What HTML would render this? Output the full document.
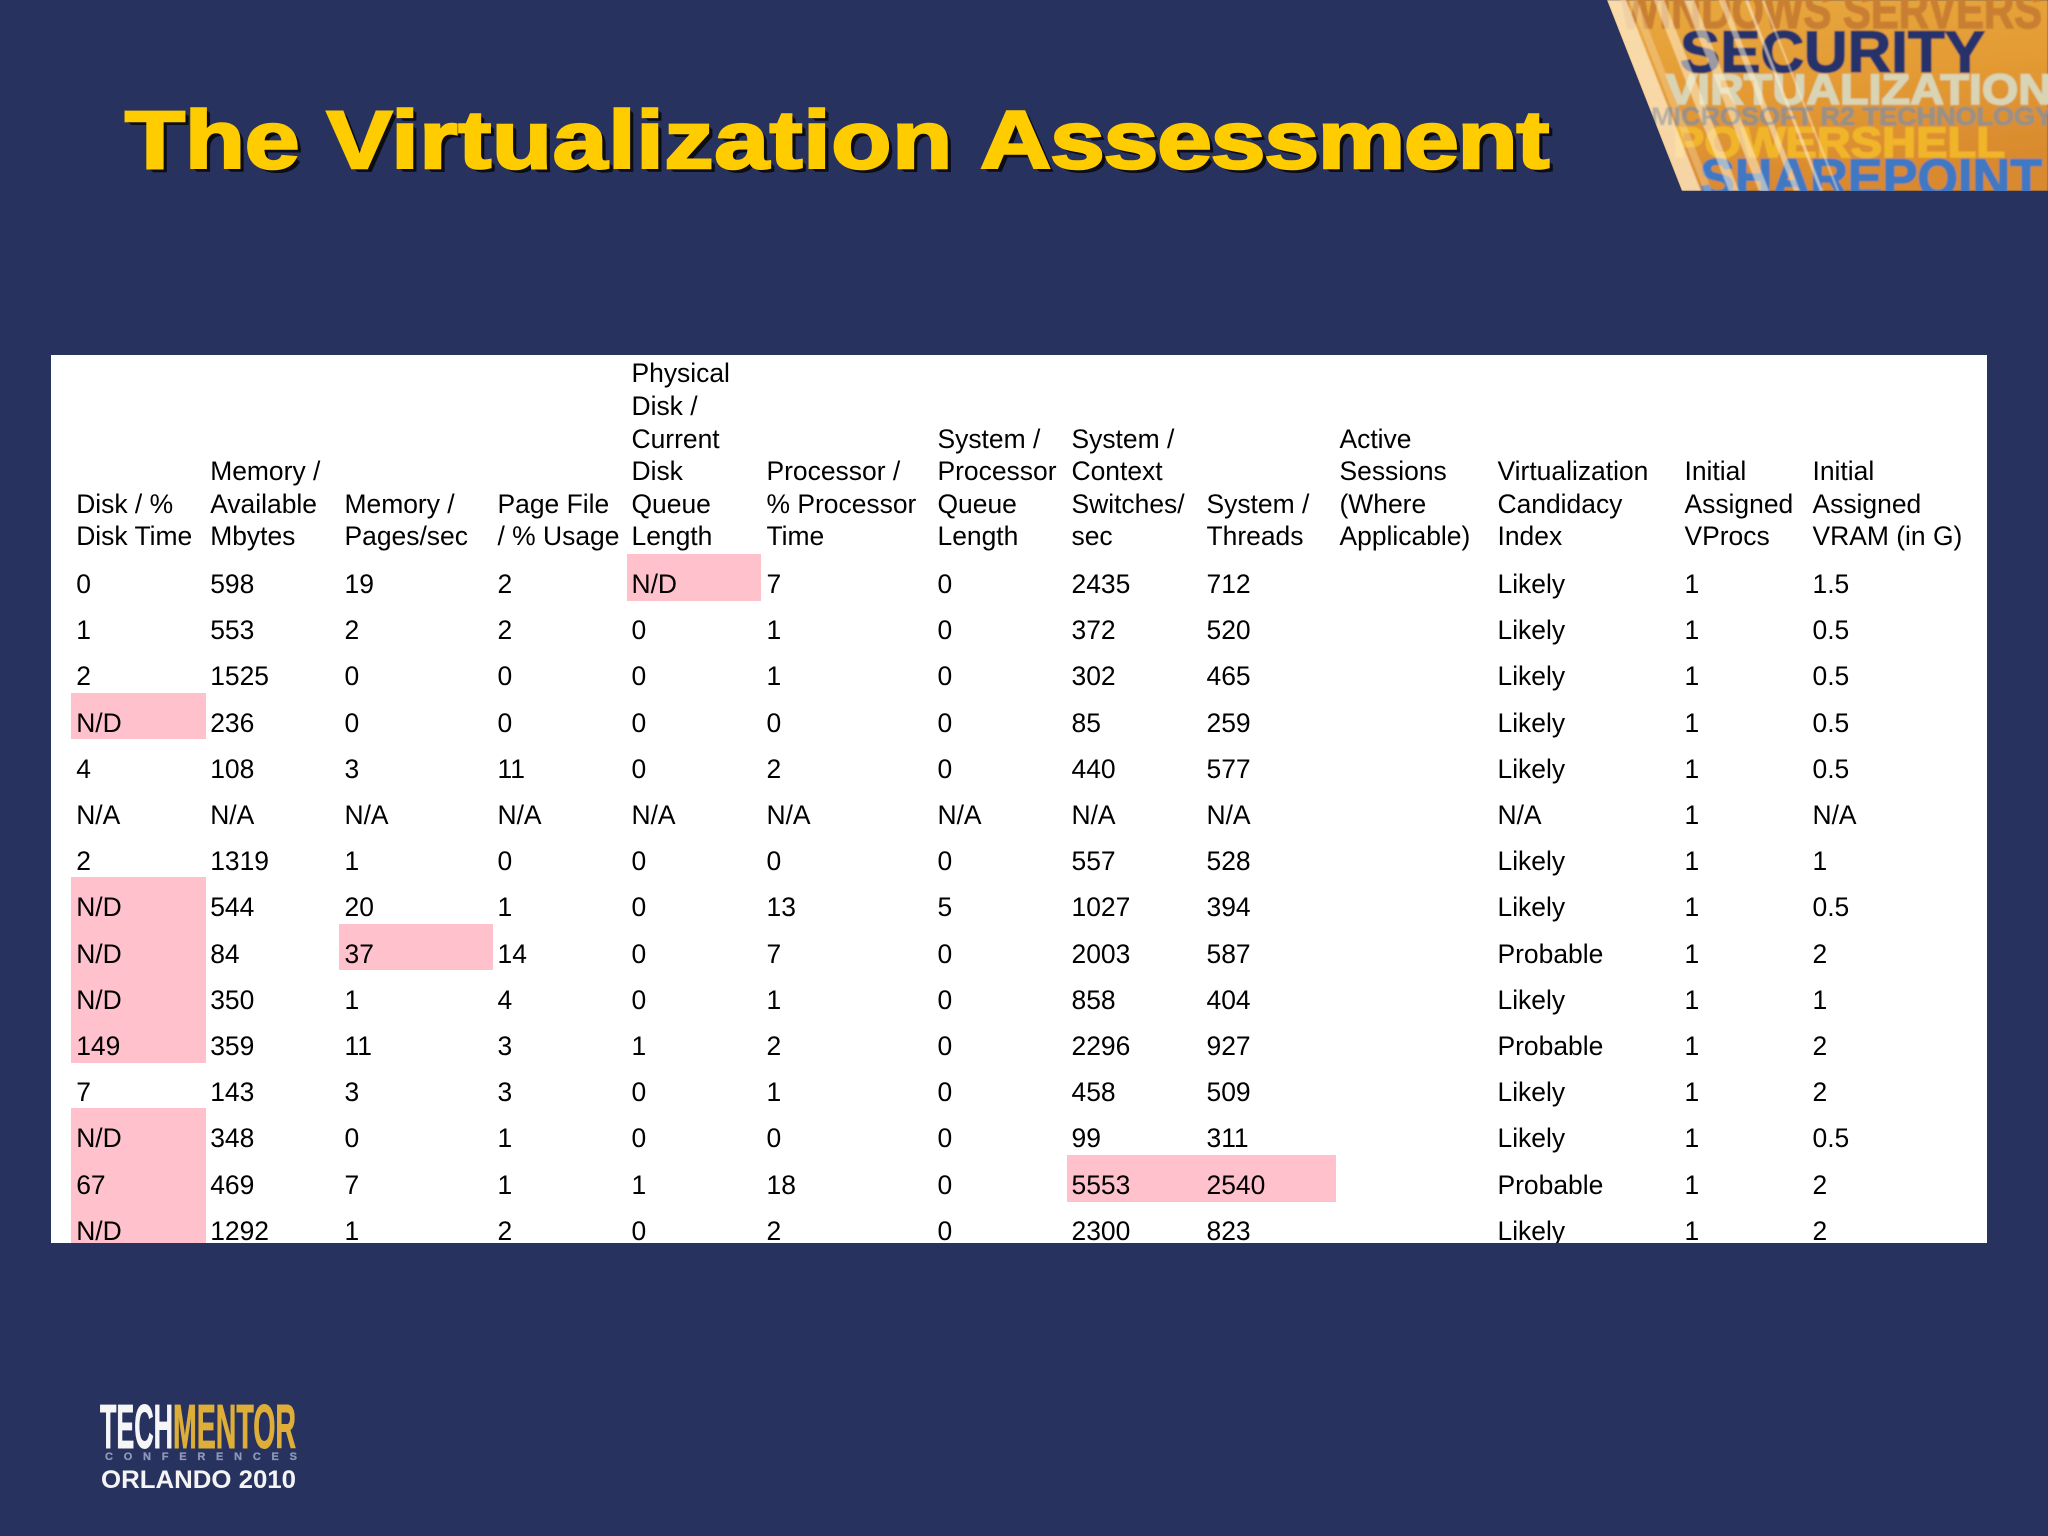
<!DOCTYPE html>
<html lang="en"><head><meta charset="utf-8"><title>The Virtualization Assessment</title>
<style>
html,body{margin:0;padding:0;width:2048px;height:1536px;overflow:hidden;background:#28325f}
body{position:relative;font-family:"Liberation Sans",Arial,sans-serif}
h1{position:absolute;left:125px;top:91.5px;margin:0;font-size:82px;line-height:98px;font-weight:bold;color:#ffcc00;white-space:nowrap;transform:scaleX(1.197);transform-origin:0 0;-webkit-text-stroke:2.6px #ffcc00;text-shadow:1px 1px 0 #0d0d14,2px 2px 0 #0d0d14,3px 3px 0 #0d0d14,4px 4px 0 #0d0d14}
h1 .v{letter-spacing:.7px}
h1 .a{letter-spacing:-.87px}
.box{position:absolute;left:51px;top:355px;width:1935.5px;height:888px;background:#fff;overflow:hidden;font-size:26.45px;line-height:32.6px;color:#000}
.p{position:absolute;background:#ffc2cd}
.r,.h{position:absolute;left:25.2px;display:grid;grid-template-columns:134px 134.3px 153px 134px 135px 171px 134px 135px 133px 158px 187px 128px 150px;white-space:nowrap}
.h{top:0.6px;height:197.4px;align-items:end}
svg{position:absolute;left:0;top:0}
svg text{font-family:"Liberation Sans",Arial,sans-serif;font-weight:bold}
</style></head><body>
<h1>The <span class="v">Virtualization</span> <span class="a">Assessment</span></h1>

<svg width="2048" height="200" viewBox="0 0 2048 200">
<defs>
<linearGradient id="g" x1="0" y1="0" x2="0.3" y2="1"><stop offset="0" stop-color="#e8a93f"/><stop offset=".55" stop-color="#e39a33"/><stop offset="1" stop-color="#d98a2e"/></linearGradient>
<clipPath id="c"><polygon points="1607,0 2048,0 2048,191 1682,191"/></clipPath>
<filter id="b" x="-2%" y="-5%" width="104%" height="110%"><feGaussianBlur stdDeviation=".7"/></filter>
</defs>
<g clip-path="url(#c)"><g filter="url(#b)">
<rect x="1600" y="0" width="448" height="191" fill="url(#g)"/>
<text x="1620" y="28" font-size="52" fill="#c97f30" stroke="#c97f30" stroke-width="1.5" textLength="422" lengthAdjust="spacingAndGlyphs">WINDOWS SERVERS</text>
<text x="1680" y="72" font-size="58" fill="#25316a" stroke="#25316a" stroke-width="1.5" textLength="305" lengthAdjust="spacingAndGlyphs">SECURITY</text>
<text x="1666" y="104" font-size="43" fill="#d8d4b4" stroke="#d8d4b4" stroke-width="1.5" textLength="386" lengthAdjust="spacingAndGlyphs">VIRTUALIZATION</text>
<text x="1651" y="125" font-size="25" fill="#9a9084" stroke="#9a9084" stroke-width="1" textLength="402" lengthAdjust="spacingAndGlyphs">MICROSOFT R2 TECHNOLOGY</text>
<text x="1673" y="157" font-size="43" fill="#f1b52c" stroke="#f1b52c" stroke-width="1.5" textLength="332" lengthAdjust="spacingAndGlyphs">POWERSHELL</text>
<text x="1700" y="196" font-size="53" fill="#3f78c2" stroke="#3f78c2" stroke-width="1.5" textLength="342" lengthAdjust="spacingAndGlyphs">SHAREPOINT</text>
<g fill="#fff0d2">
<polygon opacity=".72" points="1607,0 1626,0 1701,191 1682,191"/>
<polygon opacity=".3" points="1629,0 1637,0 1712,191 1704,191"/>
<polygon opacity=".55" points="1654,0 1664,0 1739,191 1729,191"/>
<polygon opacity=".55" points="1684,0 1694,0 1769,191 1759,191"/>
<polygon opacity=".55" points="1719,0 1725,0 1800,191 1794,191"/>
<polygon opacity=".6" points="1745,0 1748,0 1823,191 1820,191"/>
<polygon opacity=".5" points="1762,0 1764,0 1839,191 1837,191"/>
</g>
<text x="1651" y="125" font-size="25" fill="#9a9084" opacity=".55" textLength="402" lengthAdjust="spacingAndGlyphs">MICROSOFT R2 TECHNOLOGY</text>
</g></g>
</svg>

<div class="box">
<div class="p" style="left:20px;top:337.6px;width:135px;height:46.6px"></div>
<div class="p" style="left:20px;top:522.3px;width:135px;height:186px"></div>
<div class="p" style="left:20px;top:753.4px;width:135px;height:140px"></div>
<div class="p" style="left:576px;top:199px;width:134px;height:47px"></div>
<div class="p" style="left:288px;top:569px;width:154px;height:46.3px"></div>
<div class="p" style="left:1015.7px;top:800px;width:269.3px;height:46.7px"></div>

<div class="h">
<span>Disk / %<br>Disk Time</span><span>Memory /<br>Available<br>Mbytes</span><span>Memory /<br>Pages/sec</span><span>Page File<br>/ % Usage</span><span>Physical<br>Disk /<br>Current<br>Disk<br>Queue<br>Length</span><span>Processor /<br>% Processor<br>Time</span><span>System /<br>Processor<br>Queue<br>Length</span><span>System /<br>Context<br>Switches/<br>sec</span><span>System /<br>Threads</span><span>Active<br>Sessions<br>(Where<br>Applicable)</span><span>Virtualization<br>Candidacy<br>Index</span><span>Initial<br>Assigned<br>VProcs</span><span>Initial<br>Assigned<br>VRAM (in G)</span>
</div>

<div class="r" style="top:213px"><span>0</span><span>598</span><span>19</span><span>2</span><span>N/D</span><span>7</span><span>0</span><span>2435</span><span>712</span><span></span><span>Likely</span><span>1</span><span>1.5</span></div>
<div class="r" style="top:259.2px"><span>1</span><span>553</span><span>2</span><span>2</span><span>0</span><span>1</span><span>0</span><span>372</span><span>520</span><span></span><span>Likely</span><span>1</span><span>0.5</span></div>
<div class="r" style="top:305.4px"><span>2</span><span>1525</span><span>0</span><span>0</span><span>0</span><span>1</span><span>0</span><span>302</span><span>465</span><span></span><span>Likely</span><span>1</span><span>0.5</span></div>
<div class="r" style="top:351.6px"><span>N/D</span><span>236</span><span>0</span><span>0</span><span>0</span><span>0</span><span>0</span><span>85</span><span>259</span><span></span><span>Likely</span><span>1</span><span>0.5</span></div>
<div class="r" style="top:397.8px"><span>4</span><span>108</span><span>3</span><span>11</span><span>0</span><span>2</span><span>0</span><span>440</span><span>577</span><span></span><span>Likely</span><span>1</span><span>0.5</span></div>
<div class="r" style="top:444px"><span>N/A</span><span>N/A</span><span>N/A</span><span>N/A</span><span>N/A</span><span>N/A</span><span>N/A</span><span>N/A</span><span>N/A</span><span></span><span>N/A</span><span>1</span><span>N/A</span></div>
<div class="r" style="top:490.2px"><span>2</span><span>1319</span><span>1</span><span>0</span><span>0</span><span>0</span><span>0</span><span>557</span><span>528</span><span></span><span>Likely</span><span>1</span><span>1</span></div>
<div class="r" style="top:536.4px"><span>N/D</span><span>544</span><span>20</span><span>1</span><span>0</span><span>13</span><span>5</span><span>1027</span><span>394</span><span></span><span>Likely</span><span>1</span><span>0.5</span></div>
<div class="r" style="top:582.6px"><span>N/D</span><span>84</span><span>37</span><span>14</span><span>0</span><span>7</span><span>0</span><span>2003</span><span>587</span><span></span><span>Probable</span><span>1</span><span>2</span></div>
<div class="r" style="top:628.8px"><span>N/D</span><span>350</span><span>1</span><span>4</span><span>0</span><span>1</span><span>0</span><span>858</span><span>404</span><span></span><span>Likely</span><span>1</span><span>1</span></div>
<div class="r" style="top:675px"><span>149</span><span>359</span><span>11</span><span>3</span><span>1</span><span>2</span><span>0</span><span>2296</span><span>927</span><span></span><span>Probable</span><span>1</span><span>2</span></div>
<div class="r" style="top:721.2px"><span>7</span><span>143</span><span>3</span><span>3</span><span>0</span><span>1</span><span>0</span><span>458</span><span>509</span><span></span><span>Likely</span><span>1</span><span>2</span></div>
<div class="r" style="top:767.4px"><span>N/D</span><span>348</span><span>0</span><span>1</span><span>0</span><span>0</span><span>0</span><span>99</span><span>311</span><span></span><span>Likely</span><span>1</span><span>0.5</span></div>
<div class="r" style="top:813.6px"><span>67</span><span>469</span><span>7</span><span>1</span><span>1</span><span>18</span><span>0</span><span>5553</span><span>2540</span><span></span><span>Probable</span><span>1</span><span>2</span></div>
<div class="r" style="top:859.8px"><span>N/D</span><span>1292</span><span>1</span><span>2</span><span>0</span><span>2</span><span>0</span><span>2300</span><span>823</span><span></span><span>Likely</span><span>1</span><span>2</span></div>
</div>

<svg width="2048" height="1536" viewBox="0 0 2048 1536" style="pointer-events:none">
<text x="100" y="1453" font-size="62" fill="#f6f6f6" stroke="#f6f6f6" stroke-width="1" textLength="73" lengthAdjust="spacingAndGlyphs" transform="translate(0 -5)">TECH</text>
<text x="173" y="1453" font-size="62" fill="#deae38" stroke="#deae38" stroke-width="1" textLength="123" lengthAdjust="spacingAndGlyphs" transform="translate(0 -5)">MENTOR</text>
<text x="105" y="1460" font-size="11" fill="#8f97b8" stroke="#8f97b8" stroke-width=".3" textLength="192" lengthAdjust="spacing">CONFERENCES</text>
<text x="101" y="1488" font-size="25" fill="#f4f4f4" textLength="195" lengthAdjust="spacingAndGlyphs">ORLANDO 2010</text>
</svg>
</body></html>
